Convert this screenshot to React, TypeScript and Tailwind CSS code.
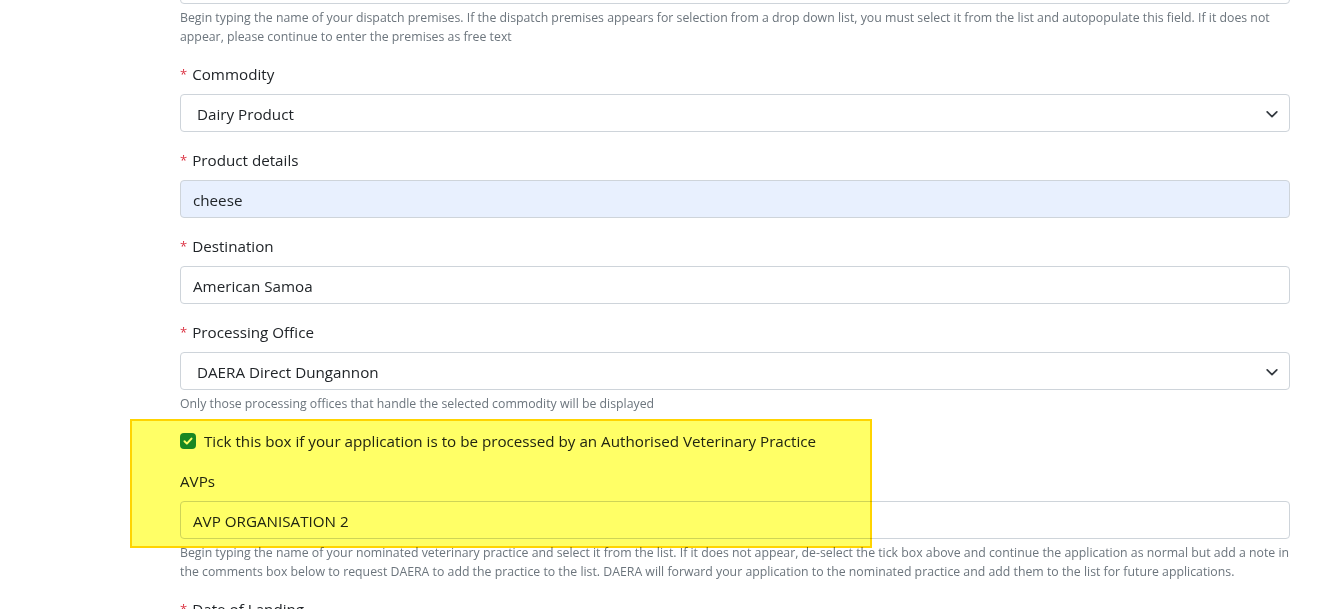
import React from 'react';

const font = { fontFamily: '"Open Sans", "Noto Sans", Arial, sans-serif' };

const Req = () => <span className="text-[#dc3545] text-[13px] mr-[5px] align-top">*</span>;

const Label = ({ children, required = true }: { children: React.ReactNode; required?: boolean }) => (
  <label className="block mb-2 h-6 leading-6 text-[15.2px] text-[#212529]">
    {required && <Req />}
    {children}
  </label>
);

const Chevron = () => (
  <svg width="14" height="14" viewBox="0 0 16 16" className="absolute right-[10px] top-[12px]">
    <path d="M2.5 5.5l5.5 5.5 5.5-5.5" fill="none" stroke="#343a40" strokeWidth="2" strokeLinecap="round" strokeLinejoin="round" />
  </svg>
);

const Field = ({ value, select, autofill }: { value: string; select?: boolean; autofill?: boolean }) => (
  <div
    className={`relative h-[38px] rounded border border-[#ced4da] pr-3 pt-[2px] flex items-center text-[15.2px] text-[#212529] ${
      autofill ? 'bg-[#e8f0fe]' : 'bg-white'
    } ${select ? 'pl-4' : 'pl-3'}`}
  >
    {value}
    {select && <Chevron />}
  </div>
);

const Help = ({ children }: { children: React.ReactNode }) => (
  <p className="mt-1 text-[12.3px] leading-[19px] text-[#6c757d]">{children}</p>
);

export default function App() {
  return (
    <div className="h-[609px] overflow-hidden bg-white relative" style={font}>
      <div className="ml-[180px] mr-[48px] -mt-[34px]">
        <Field value="" />
        <Help>
          Begin typing the name of your dispatch premises. If the dispatch premises appears for selection from a drop down list,
          you must select it from the list and autopopulate this field. If it does not appear, please continue to enter the
          premises as free text
        </Help>

        <div className="mt-4">
          <Label>Commodity</Label>
          <Field value="Dairy Product" select />
        </div>

        <div className="mt-4">
          <Label>Product details</Label>
          <Field value="cheese" autofill />
        </div>

        <div className="mt-4">
          <Label>Destination</Label>
          <Field value="American Samoa" />
        </div>

        <div className="mt-4">
          <Label>Processing Office</Label>
          <Field value="DAERA Direct Dungannon" select />
          <Help>Only those processing offices that handle the selected commodity will be displayed</Help>
        </div>

        <div className="mt-4 flex items-center h-6 text-[15.2px] text-[#212529]">
          <span className="w-4 h-4 rounded bg-[#198754] flex items-center justify-center mr-2">
            <svg width="12" height="12" viewBox="0 0 12 12">
              <path d="M2.5 6.2l2.4 2.4 4.6-5" fill="none" stroke="#fff" strokeWidth="2" strokeLinecap="round" strokeLinejoin="round" />
            </svg>
          </span>
          Tick this box if your application is to be processed by an Authorised Veterinary Practice
        </div>

        <div className="mt-4">
          <Label required={false}>AVPs</Label>
          <Field value="AVP ORGANISATION 2" />
          <Help>
            Begin typing the name of your nominated veterinary practice and select it from the list. If it does not appear,
            de-select the tick box above and continue the application as normal but add a note in the comments box below to
            request DAERA to add the practice to the list. DAERA will forward your application to the nominated practice and add
            them to the list for future applications.
          </Help>
        </div>

        <div className="mt-4">
          <Label>Date of Landing</Label>
        </div>
      </div>

      <div className="absolute left-[130px] top-[419px] w-[742px] h-[129px] bg-[#ffff66] border-2 border-[#ffd400] mix-blend-multiply" />
    </div>
  );
}
